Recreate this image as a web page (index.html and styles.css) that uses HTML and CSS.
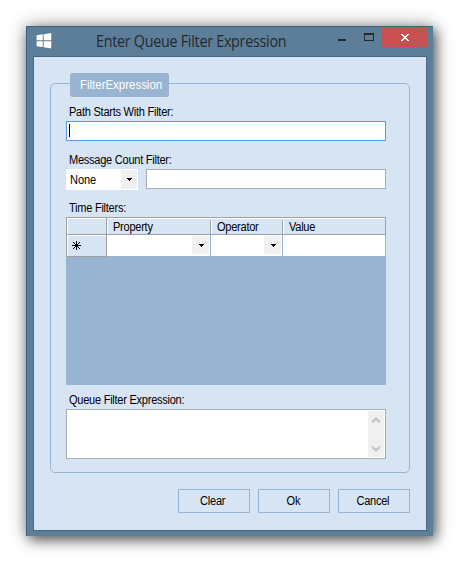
FILE: index.html
```html
<!DOCTYPE html>
<html lang="en">
<head>
<meta charset="utf-8">
<title>Enter Queue Filter Expression</title>
<link rel="stylesheet" href="styles.css">
</head>
<body>
<main class="window">
  <header class="titlebar">
    <svg class="logo" width="16" height="16" viewBox="0 0 16 16"><path fill="#fff" d="M.6 2.2 6.8 1.300V7.300H.6zM7.700 1.200 15.300 0V7.300H7.700zM.6 8.200H6.800V14.100L.6 13.200zM7.700 8.200H15.300V15.400L7.700 14.200z"/></svg>
    <h1 class="title">Enter Queue Filter Expression</h1>
    <div class="controls">
      <span class="minimize"></span>
      <span class="maximize"></span>
      <span class="close"><svg width="8" height="7" viewBox="0 0 8 7" shape-rendering="crispEdges"><path fill="#fff" d="M0 0h2v1h1v1h2V1h1V0h2v1H7v1H6v1H5v1h1v1h1v1h1v1H6V6H5V5H3v1H2v1H0V6h1V5h1V4h1V3H2V2H1V1H0z"/></svg></span>
    </div>
  </header>
  <section class="client">
    <div class="group">
      <div class="badge"><span class="text">FilterExpression</span></div>
      <label class="label"><span class="text">Path Starts With Filter:</span></label>
      <div class="field focused"><i class="caret"></i></div>
      <label class="label"><span class="text">Message Count Filter:</span></label>
      <div class="row">
        <div class="combo"><span class="text">None</span><div class="drop"><svg width="5" height="3" shape-rendering="crispEdges"><path d="M0 0h5v1H4v1H3v1H2V2H1V1H0z"/></svg></div></div>
        <div class="field grow"></div>
      </div>
      <label class="label"><span class="text">Time Filters:</span></label>
      <div class="table">
        <div class="thead">
          <div class="corner"></div>
          <div class="th"><span class="text">Property</span></div>
          <div class="th"><span class="text">Operator</span></div>
          <div class="th"><span class="text">Value</span></div>
        </div>
        <div class="tr">
          <div class="rowhead"><svg width="9" height="9" viewBox="0 0 9 9" shape-rendering="crispEdges"><path fill="#000" d="M4 0h1v3h1V2h1V1h1v1H7v1H6v1h3v1H6v1h1v1h1v1H7V7H6V6H5v3H4V6H3v1H2v1H1V7h1V6h1V5H0V4h3V3H2V2H1V1h1v1h1v1h1z"/></svg></div>
          <div class="td"><div class="drop wide"><svg width="5" height="3" shape-rendering="crispEdges"><path d="M0 0h5v1H4v1H3v1H2V2H1V1H0z"/></svg></div></div>
          <div class="td"><div class="drop wide"><svg width="5" height="3" shape-rendering="crispEdges"><path d="M0 0h5v1H4v1H3v1H2V2H1V1H0z"/></svg></div></div>
          <div class="td"></div>
        </div>
      </div>
      <label class="label"><span class="text">Queue Filter Expression:</span></label>
      <div class="textarea">
        <div class="scroll">
          <svg width="8" height="6" viewBox="0 0 8 6"><path fill="#c0c0c0" d="M0 4 4 0 8 4V6H7.500L4 3 .5 6H0z"/></svg>
          <svg width="8" height="6" viewBox="0 0 8 6"><path fill="#c0c0c0" d="M0 2 4 6 8 2V0H7.500L4 3 .5 0H0z"/></svg>
        </div>
      </div>
    </div>
    <footer class="actions">
      <div class="button"><span class="text">Clear</span></div>
      <div class="button"><span class="text">Ok</span></div>
      <div class="button"><span class="text">Cancel</span></div>
    </footer>
  </section>
</main>
</body>
</html>
```

FILE: styles.css
```css
* { box-sizing: border-box; }
body {
  margin: 0;
  height: 562px;
  padding: 26px;
  background: #fff;
  overflow: hidden;
  font: 12px/14px "Liberation Sans", sans-serif;
  letter-spacing: -0.28px;
  color: #000;
}
.text { display: inline-block; transform: scaleX(.92); transform-origin: 0 50%; }
.window {
  width: 407px;
  height: 510px;
  padding: 0 5px 4px 6px;
  background: #5c7e98;
  border: 1px solid #40617a;
  border-right-color: #5c7e98;
  border-bottom-color: #5c7e98;
  box-shadow: 3px 4px 12px rgba(0,0,0,.55), 0 0 18px rgba(0,0,0,.32);
}
.titlebar { display: flex; height: 29px; }
.logo { margin: 6px 0 0 3px; }
.title {
  width: 194px;
  margin: 3px 0 0 44px;
  font: 16px/22px "Open Sans", sans-serif;
  letter-spacing: -0.3px;
  transform: scaleX(.895);
  transform-origin: 0 50%;
  white-space: nowrap;
  color: #26292c;
}
.controls { display: flex; margin-left: auto; }
.minimize { width: 8px; height: 2px; margin: 12px 18px 0 0; background: #262a2d; }
.maximize { width: 10px; height: 8px; margin: 6px 8px 0 0; border: 1px solid #262a2d; border-top-width: 2px; }
.close { display: flex; align-items: center; justify-content: center; width: 45px; height: 20px; background: #c75050; }
.client {
  height: 475px;
  padding: 26px 16px 0;
  border: 1px solid #466880;
  background: #d7e4f4;
}
.group {
  height: 390px;
  padding: 0 23px 0 15px;
  border: 1px solid #99b4d1;
  border-radius: 5px;
}
.badge {
  width: 99px;
  height: 24px;
  margin: -11px 0 8px 4px;
  padding: 5px 0 0 10px;
  border-radius: 3px;
  background: #99b4d1;
  color: #fff;
  letter-spacing: 0;
}
.badge .text { transform: scaleX(.955); }
.badge, .label, .th, .combo, .button { white-space: nowrap; }
.label { display: block; height: 16px; padding: 0 0 0 2.5px; }
.field { height: 20px; border: 1px solid #abadb3; background: #fff; }
.focused { border-color: #569de5; padding: 2px 0 0 2px; margin-bottom: 12px; }
.caret { display: block; width: 1px; height: 13px; background: #000; }
.row { display: flex; gap: 8px; height: 32px; }
.combo { display: flex; justify-content: space-between; width: 72px; height: 21px; padding: 1px 1px 1px 4px; background: #fff; line-height: 20px; letter-spacing: -0.1px; }
.drop { display: flex; align-items: center; justify-content: center; width: 16px; background: #f0f0f0; }
.wide { width: 17px; padding-left: 1px; }
.grow { flex: 1; }
.table { height: 168px; margin-bottom: 8px; background: #99b4d1; }
.thead, .tr { display: grid; grid-template-columns: 41px 104px 72px 103px; }
.thead { height: 18px; border: 1px solid #a0a0a0; border-width: 1px 1px 1px 0; background: #d7e4f4; box-shadow: inset 0 1px #fff; }
.corner { border: 1px solid #a0a0a0; border-width: 0 1px 0 1px; box-shadow: inset 1px 1px #fff; }
.th { height: 14px; margin-top: 2px; padding-left: 5.5px; line-height: 14px; box-shadow: inset 1px 0 #fff; }
.th:not(:last-child) { border-right: 1px solid #a0a0a0; }
.th:last-child { width: 102px; }
.tr { height: 21px; background: #fff; }
.rowhead { display: flex; align-items: center; padding: 0 0 0 5px; border: 1px solid #a0a0a0; border-top: 0; height: 22px; background: #d7e4f4; box-shadow: inset 1px 1px #fff; }
.td { display: flex; justify-content: flex-end; padding: 1px 1px 3px; border-right: 1px solid #99b4d1; }
.textarea { display: flex; justify-content: flex-end; height: 50px; padding: 1px; border: 1px solid #abadb3; background: #fff; }
.scroll { display: flex; flex-direction: column; align-items: center; justify-content: space-between; width: 16px; padding: 6px 0 5px; background: #f0f0f0; }
.actions { display: flex; justify-content: flex-end; gap: 8px; margin-top: 16px; }
.button { width: 72px; height: 24px; padding-right: 2px; border: 1px solid #99b4d1; line-height: 23px; text-align: center; }
.button .text { transform-origin: 50% 50%; }
```
